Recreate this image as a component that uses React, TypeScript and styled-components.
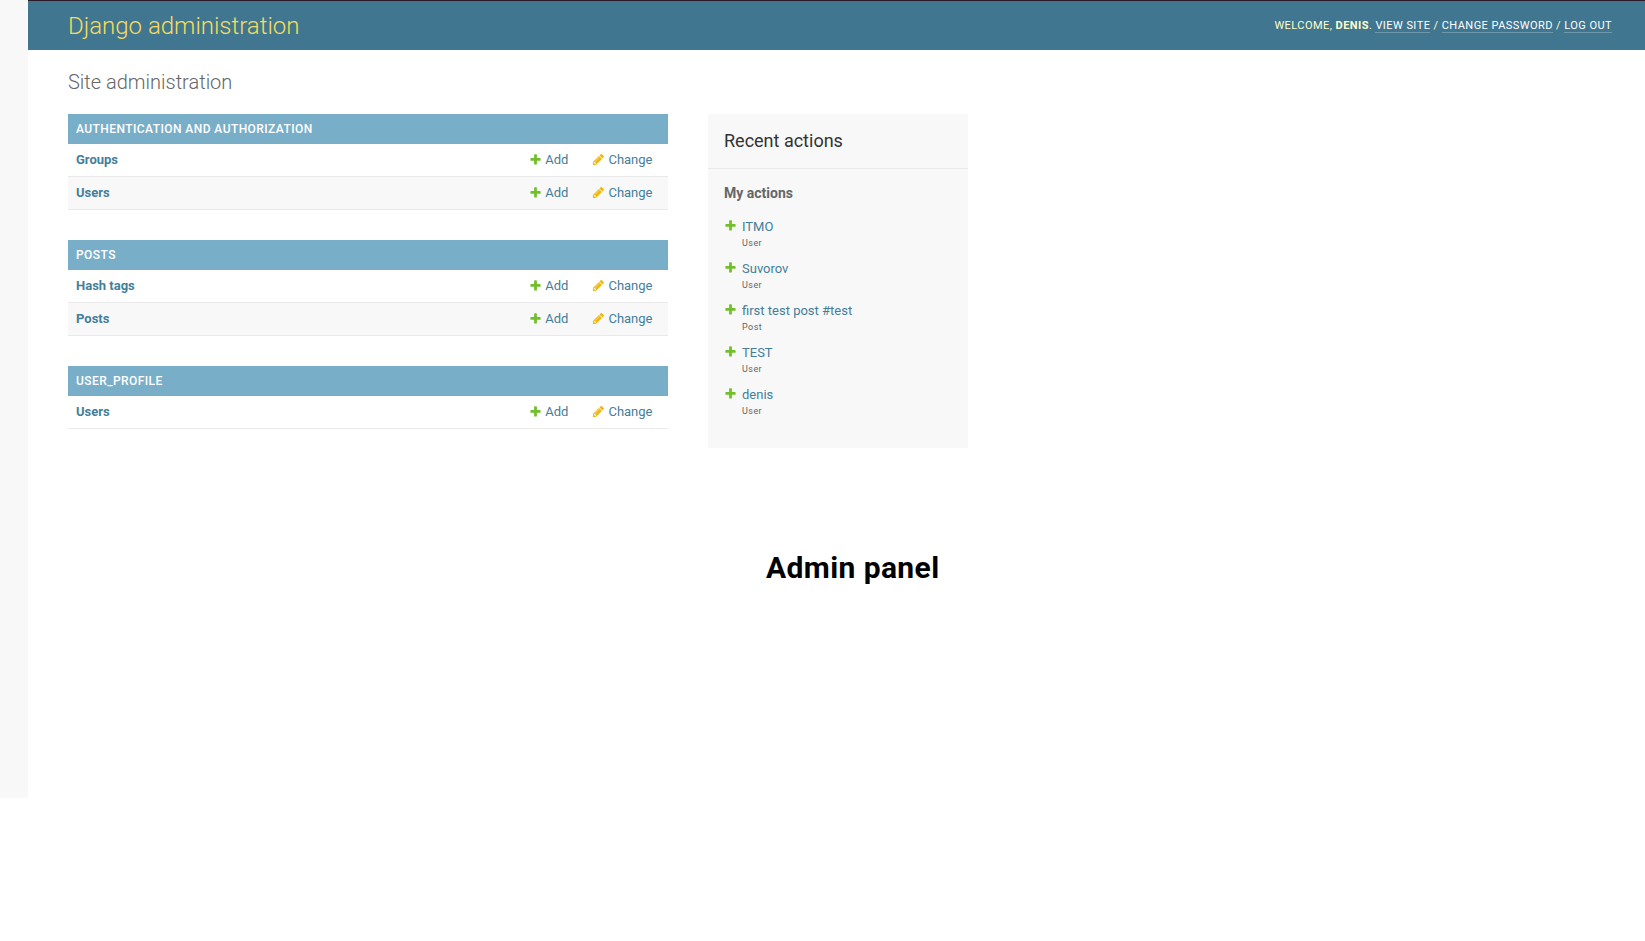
import React from "react";
import styled, { createGlobalStyle } from "styled-components";

const GlobalStyle = createGlobalStyle`
  * { box-sizing: border-box; }
  body {
    margin: 0;
    background: #fff;
    color: #333;
    font-family: Roboto, "Liberation Sans", sans-serif;
    font-size: 13px;
  }
  a { color: #447e9b; text-decoration: none; }
  h1, h2, h3, p, ul { margin: 0; padding: 0; }
`;

const Page = styled.div`
  display: flex;
  align-items: flex-start;
  height: 941px;
  overflow: hidden;
`;

const SideStrip = styled.aside`
  flex: 0 0 28px;
  height: 798px;
  background: #f8f8f8;
`;

const Main = styled.div`
  flex: 1;
  min-width: 0;
`;

const Header = styled.header`
  display: flex;
  justify-content: space-between;
  align-items: center;
  height: 50px;
  padding: 0 33px 0 40px;
  border-top: 1px solid #2c1826;
  background: #417690;
  color: #ffc;
`;

const Brand = styled.h1`
  font-size: 24px;
  font-weight: 300;
  line-height: 28px;
  color: #f5dd5d;
`;

const UserTools = styled.div`
  font-size: 11px;
  line-height: 14px;
  letter-spacing: 0.45px;
  text-transform: uppercase;

  strong { font-weight: 700; }
`;

const ToolLink = styled.a`
  color: #fff;
  border-bottom: 1px solid rgba(255, 255, 255, 0.25);
`;

const Content = styled.main`
  padding: 20px 40px 0;
`;

const PageTitle = styled.h1`
  height: 44px;
  font-size: 20px;
  font-weight: 300;
  line-height: 24px;
  color: #666;
`;

const Columns = styled.div`
  display: flex;
  align-items: flex-start;
  gap: 40px;
`;

const Apps = styled.div`
  display: flex;
  flex-direction: column;
  gap: 30px;
  width: 600px;
`;

const Caption = styled.h2`
  height: 30px;
  padding: 7px 8px;
  background: #79aec8;
  color: #fff;
  font-size: 12px;
  font-weight: 500;
  line-height: 16px;
  letter-spacing: 0.43px;
  text-transform: uppercase;
`;

const Row = styled.div<{ $shaded: boolean }>`
  display: flex;
  height: 33px;
  padding: 8px 15.5px 8px 8px;
  border-bottom: 1px solid #eaeaea;
  background: ${(p) => (p.$shaded ? "#f8f8f8" : "#fff")};
  line-height: 16px;
`;

const ModelLink = styled.a`
  flex: 1;
  font-weight: 700;
`;

const ActionLink = styled.a`
  display: flex;
  gap: 3.5px;
  margin-left: 23.5px;
`;

const Icon = styled.svg`
  flex: none;
  display: block;
  width: 13px;
  height: 13px;
  margin-top: 1px;
`;

const Recent = styled.aside`
  width: 260px;
  height: 334px;
  background: #f8f8f8;
`;

const RecentTitle = styled.h2`
  height: 55px;
  padding: 16px;
  border-bottom: 1px solid #eaeaea;
  font-size: 18px;
  font-weight: 400;
  line-height: 22px;
  color: #333;
`;

const RecentSubtitle = styled.h3`
  padding: 16px 16px 0;
  font-size: 14px;
  font-weight: 700;
  line-height: 17px;
  color: #666;
`;

const ActionList = styled.ul`
  display: flex;
  flex-direction: column;
  padding: 16px 16px 0;
  list-style: none;
`;

const ActionItem = styled.li`
  display: flex;
  gap: 5px;
  height: 42px;
`;

const ActionText = styled.div`
  display: flex;
  flex-direction: column;
  line-height: 17px;
`;

const Kind = styled.span`
  font-size: 9px;
  line-height: 16px;
  letter-spacing: 0.45px;
  color: #666;
`;

const Footnote = styled.p`
  margin: 100px 0 0 698px;
  font-size: 30px;
  font-weight: 700;
  line-height: 40px;
  letter-spacing: 0.4px;
  color: #000;
`;

const AddIcon = () => (
  <Icon viewBox="0 0 1792 1792">
    <path
      fill="#70bf2b"
      d="M1600 796v192q0 40-28 68t-68 28h-416v416q0 40-28 68t-68 28h-192q-40 0-68-28t-28-68v-416h-416q-40 0-68-28t-28-68v-192q0-40 28-68t68-28h416v-416q0-40 28-68t68-28h192q40 0 68 28t28 68v416h416q40 0 68 28t28 68z"
    />
  </Icon>
);

const ChangeIcon = () => (
  <Icon viewBox="0 0 1792 1792">
    <path
      fill="#efb80b"
      d="M491 1536l91-91-235-235-91 91v107h128v128h107zm523-928q0-22-22-22-10 0-17 7l-542 542q-7 7-7 17 0 22 22 22 10 0 17-7l542-542q7-7 7-17zm-54-192l416 416-832 832h-416v-416zm683 96q0 53-37 90l-166 166-416-416 166-165q36-38 90-38 53 0 91 38l235 234q37 39 37 91z"
    />
  </Icon>
);

const apps = [
  { name: "Authentication and Authorization", models: ["Groups", "Users"] },
  { name: "Posts", models: ["Hash tags", "Posts"] },
  { name: "User_profile", models: ["Users"] },
];

const actions = [
  { label: "ITMO", kind: "User" },
  { label: "Suvorov", kind: "User" },
  { label: "first test post #test", kind: "Post" },
  { label: "TEST", kind: "User" },
  { label: "denis", kind: "User" },
];

export default function App() {
  return (
    <Page>
      <GlobalStyle />
      <SideStrip />
      <Main>
        <Header>
          <Brand>Django administration</Brand>
          <UserTools>
            Welcome, <strong>denis</strong>. <ToolLink href="#">View site</ToolLink> /{" "}
            <ToolLink href="#">Change password</ToolLink> / <ToolLink href="#">Log out</ToolLink>
          </UserTools>
        </Header>
        <Content>
          <PageTitle>Site administration</PageTitle>
          <Columns>
            <Apps>
              {apps.map((app) => (
                <section key={app.name}>
                  <Caption>{app.name}</Caption>
                  {app.models.map((model, i) => (
                    <Row key={model} $shaded={i % 2 === 1}>
                      <ModelLink href="#">{model}</ModelLink>
                      <ActionLink href="#">
                        <AddIcon />
                        Add
                      </ActionLink>
                      <ActionLink href="#">
                        <ChangeIcon />
                        Change
                      </ActionLink>
                    </Row>
                  ))}
                </section>
              ))}
            </Apps>
            <Recent>
              <RecentTitle>Recent actions</RecentTitle>
              <RecentSubtitle>My actions</RecentSubtitle>
              <ActionList>
                {actions.map((action) => (
                  <ActionItem key={action.label}>
                    <AddIcon />
                    <ActionText>
                      <a href="#">{action.label}</a>
                      <Kind>{action.kind}</Kind>
                    </ActionText>
                  </ActionItem>
                ))}
              </ActionList>
            </Recent>
          </Columns>
          <Footnote>Admin panel</Footnote>
        </Content>
      </Main>
    </Page>
  );
}
